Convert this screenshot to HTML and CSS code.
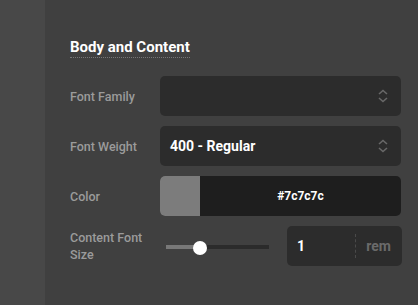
FILE: index.html
```html
<!DOCTYPE html>
<html lang="en">
<head>
    <meta charset="UTF-8">
    <meta name="viewport" content="width=device-width, initial-scale=1.0">
    <title>Body and Content</title>
    <link rel="stylesheet" href="styles.css">
</head>
<body>
    <div class="layout">
        <div class="rail"></div>

        <div class="panel">
            <h3 class="section-title">Body and Content</h3>

            <div class="fields">
                <div class="field-label">Font Family</div>
                <div class="select">
                    <span class="select-value"></span>
                    <svg class="chevrons" width="10" height="14" viewBox="0 0 10 14">
                        <path d="M1 5 L5 1.5 L9 5 M1 9 L5 12.5 L9 9" fill="none" stroke="#686868" stroke-width="1.6"/>
                    </svg>
                </div>

                <div class="field-label">Font Weight</div>
                <div class="select">
                    <span class="select-value">400 - Regular</span>
                    <svg class="chevrons" width="10" height="14" viewBox="0 0 10 14">
                        <path d="M1 5 L5 1.5 L9 5 M1 9 L5 12.5 L9 9" fill="none" stroke="#686868" stroke-width="1.6"/>
                    </svg>
                </div>

                <div class="field-label">Color</div>
                <div class="color-input">
                    <div class="swatch"></div>
                    <div class="color-hex">#7c7c7c</div>
                </div>

                <div class="field-label">Content Font Size</div>
                <div class="size-control">
                    <div class="slider">
                        <div class="track">
                            <div class="track-fill" style="width: 33%"></div>
                            <div class="thumb" style="left: 33%"></div>
                        </div>
                    </div>
                    <div class="number-input">
                        <span class="number-value">1</span>
                        <span class="unit">rem</span>
                    </div>
                </div>
            </div>
        </div>
    </div>
</body>
</html>
```

FILE: styles.css
```css
body {
    margin: 0;
    padding: 0;
    background-color: #404040;
    font-family: Roboto, "Liberation Sans", sans-serif;
    width: 418px;
    height: 305px;
    overflow: hidden;
}

.layout {
    display: flex;
    height: 305px;
}

.rail {
    width: 45px;
    background-color: #484848;
}

.panel {
    flex: 1;
    padding: 39px 17px 0 25px;
}

.section-title {
    width: fit-content;
    margin: 0;
    font-size: 15px;
    font-weight: 700;
    line-height: 17px;
    color: #ffffff;
    padding-bottom: 1px;
    border-bottom: 1px dotted #777777;
}

.fields {
    display: grid;
    grid-template-columns: 90px 1fr;
    grid-auto-rows: 40px;
    row-gap: 10px;
    margin-top: 18px;
}

.field-label {
    display: flex;
    align-items: center;
    font-size: 12.5px;
    font-weight: 500;
    line-height: 17px;
    color: #9b9b9b;
    padding-right: 12px;
}

.select {
    display: flex;
    align-items: center;
    justify-content: space-between;
    background-color: #2c2c2c;
    border-radius: 5px;
    padding: 0 13px 0 10px;
}

.select-value {
    font-size: 14px;
    font-weight: 700;
    color: #ffffff;
}

.color-input {
    display: flex;
    background-color: #1e1e1e;
    border-radius: 5px;
    overflow: hidden;
}

.swatch {
    width: 40px;
    background-color: #7c7c7c;
}

.color-hex {
    flex: 1;
    display: flex;
    align-items: center;
    justify-content: center;
    font-size: 12px;
    font-weight: 700;
    color: #ffffff;
}

.size-control {
    display: flex;
    align-items: center;
    gap: 18px;
    margin-right: -1px;
}

.slider {
    flex: 1;
    padding: 0 0 0 6px;
}

.track {
    position: relative;
    height: 4px;
    background-color: #2b2b2b;
    margin-top: 1px;
}

.track-fill {
    height: 100%;
    background-color: #787878;
}

.thumb {
    position: absolute;
    top: 50%;
    width: 14px;
    height: 14px;
    margin: -6px 0 0 -7px;
    border-radius: 50%;
    background-color: #ffffff;
}

.number-input {
    width: 115px;
    height: 40px;
    box-sizing: border-box;
    display: flex;
    align-items: center;
    background-color: #2c2c2c;
    border-radius: 5px;
    padding: 0 11px 0 10px;
}

.number-value {
    flex: 1;
    font-size: 14px;
    font-weight: 700;
    color: #ffffff;
    align-self: stretch;
    display: flex;
    align-items: center;
    border-right: 1px dashed #4a4a4a;
    margin: 8px 0;
}

.unit {
    padding-left: 10px;
    font-size: 14px;
    font-weight: 700;
    color: #6a6a6a;
}
```
